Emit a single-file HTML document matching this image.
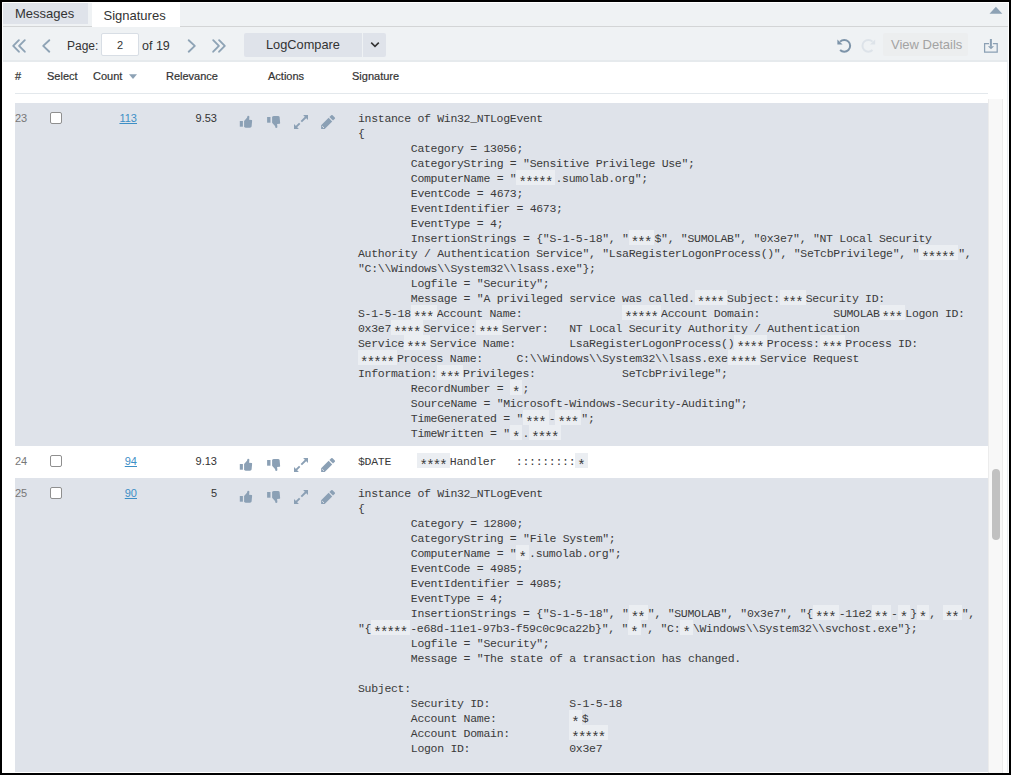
<!DOCTYPE html>
<html><head><meta charset="utf-8">
<style>
*{box-sizing:border-box;margin:0;padding:0}
html,body{width:1011px;height:775px;overflow:hidden;background:#000}
body{font-family:"Liberation Sans",sans-serif;color:#333;position:relative}
.abs{position:absolute}
#frame{left:2px;top:2px;width:1007px;height:771px;background:#fff}
#tabbar{left:3px;top:3px;width:1005px;height:24px;background:#eff2f4}
#tabline{left:3px;top:26px;width:1005px;height:1px;background:#d3d5d6}
#tab-msg{left:3px;top:3px;width:85px;height:21px;background:#dfe3ea;font-size:13px;line-height:15px}
#tab-sig{left:92px;top:2px;width:88px;height:25px;background:#fff;font-size:13px;line-height:15px}
#toolbar{left:3px;top:27px;width:1005px;height:35px;background:#eff2f4;border-bottom:2px solid #e6eaed}
.tt{position:absolute;font-size:12.5px;line-height:15px;color:#333}
#pinput{left:101px;top:33px;width:38px;height:23px;background:#fff;border:1px solid #d8dee5;border-radius:2px}
#lcbtn{left:244px;top:33px;width:118px;height:24px;background:#dfe3ea;border-radius:2px 0 0 2px}
#lcdd{left:363px;top:33px;width:23px;height:24px;background:#dfe3ea;border-radius:0 2px 2px 0}
#vdbtn{left:883px;top:33px;width:85px;height:23px;background:#eceeef;border-radius:2px}
.th{position:absolute;top:70px;font-size:11px;font-weight:normal;-webkit-text-stroke:0.2px #333;line-height:13px;color:#333}
#hline{left:15px;top:93px;width:973px;height:1px;background:#e3e8ec}
.row{position:absolute;left:15px;width:973px;overflow:hidden}
.gray{background:#dfe3ea}
.num{position:absolute;left:0;font-size:11px;color:#777;line-height:13px}
.cnt{position:absolute;font-size:11px;color:#3d8fc6;text-decoration:underline;line-height:13px}
.rel{position:absolute;font-size:11px;color:#333;line-height:13px;text-align:right;width:60px;left:142px}
.cb{position:absolute;left:35px;width:12px;height:12px;border:1px solid #8f8f8f;border-radius:2px;background:#fff}
.acts{position:absolute;left:221px;top:9px}
.sig{position:absolute;left:343px;font-family:"Liberation Mono",monospace;font-size:11.5px;letter-spacing:-0.3px;line-height:15px;white-space:pre;tab-size:8;color:#3a3a3a}
.m{display:inline-block;height:15px;vertical-align:top;position:relative;top:-1px;background:#ebeef2;padding:0 3px}
.m b{font-weight:normal;font-size:14px;line-height:15px;letter-spacing:-1.8px;position:relative;top:5.8px;left:-0.9px}
#scroll{left:988px;top:99px;width:15px;height:674px;background:#f8f8f8;border-left:1px solid #ececec;border-right:1px solid #ececec}
#thumb{left:992px;top:469px;width:8px;height:71px;background:#c1c1c1;border-radius:4px}
</style></head><body>
  <div id="frame" class="abs"></div>
  <div id="tabbar" class="abs"></div>
  <div id="tabline" class="abs"></div>
  <div id="tab-msg" class="abs"><span style="position:absolute;left:12px;top:3px">Messages</span></div>
  <div id="tab-sig" class="abs"><span style="position:absolute;top:6px;left:11.5px">Signatures</span></div>
  <svg class="abs" style="left:0;top:0" width="1011" height="62" viewBox="0 0 1011 62">
    <path d="M989.5 13.7 L995.9 6.8 L1002.3 13.7 Z" fill="#8da2b5"/>
  </svg>

  <div id="toolbar" class="abs"></div>
  <div class="tt" style="left:67px;top:39px;font-size:12px">Page:</div>
  <div id="pinput" class="abs"><span style="position:absolute;left:15px;top:5px;font-size:11px;line-height:13px">2</span></div>
  <div class="tt" style="left:142px;top:39px">of 19</div>
  <div id="lcbtn" class="abs"><span style="position:absolute;left:22px;top:4px;font-size:12.8px;line-height:15px">LogCompare</span></div>
  <div id="lcdd" class="abs"></div>
  <div id="vdbtn" class="abs"><span style="position:absolute;left:8px;top:4px;font-size:13px;line-height:15px;color:#a3a3a3">View Details</span></div>
  <svg class="abs" style="left:0;top:0" width="1011" height="62" viewBox="0 0 1011 62">
    <g fill="none" stroke="#8ea3b5" stroke-width="1.9" stroke-linecap="round" stroke-linejoin="round">
      <polyline points="18.9,40.2 13.2,45.9 18.9,51.7"/>
      <polyline points="24.8,40.2 19.1,45.9 24.8,51.7"/>
      <polyline points="49.3,40.2 43.2,45.9 49.3,51.7"/>
      <polyline points="188.7,40.2 194.8,45.9 188.7,51.7"/>
      <polyline points="213.2,40.2 218.9,45.9 213.2,51.7"/>
      <polyline points="219.1,40.2 224.8,45.9 219.1,51.7"/>
    </g>
    <polyline points="371.2,42.6 375,46.3 378.8,42.6" fill="none" stroke="#333" stroke-width="1.6"/>
    <path d="M840.1 41.6 A5.9 5.9 0 1 1 840.1 50.0" fill="none" stroke="#7d94a9" stroke-width="2"/>
    <path d="M837.4 39.4 L837.4 44.6 L842.6 44.6 Z" fill="#7d94a9"/>
    <path d="M872.5 41.6 A5.9 5.9 0 1 0 872.5 50.0" fill="none" stroke="#dde3e9" stroke-width="2"/>
    <path d="M875.2 39.4 L875.2 44.6 L870.0 44.6 Z" fill="#dde3e9"/>
    <path d="M989.0 43.6 H984.6 V52.1 H997.2 V43.6 H992.9" fill="none" stroke="#8ba0b4" stroke-width="1.25"/>
    <rect x="989.9" y="39" width="2" height="7.5" fill="#8ba0b4"/>
    <path d="M987.9 46.2 H994.1 L991 49.3 Z" fill="#8ba0b4"/>
  </svg>

  <div class="th" style="left:15px">#</div>
  <div class="th" style="left:47px">Select</div>
  <div class="th" style="left:93px">Count</div>
  <svg class="abs" style="left:128px;top:74px" width="10" height="6" viewBox="0 0 10 6"><path d="M1 0.3 H9 L5 5 Z" fill="#8da2b5"/></svg>
  <div class="th" style="left:166px">Relevance</div>
  <div class="th" style="left:268px">Actions</div>
  <div class="th" style="left:352px">Signature</div>
  <div id="hline" class="abs"></div>

<svg width="0" height="0" style="position:absolute"><defs><g id="acts" fill="#8ba0b5">
<g transform="translate(239,115)">
 <rect x="0.8" y="6" width="3.1" height="5.7"/>
 <path d="M5.1 5.9 L8.0 2.8 L8.5 1.0 Q9.6 0.4 10.4 1.4 L10.1 4.7 L12.8 4.9 Q13.3 5.3 13.1 6.1 L12.6 11.6 Q12.4 12.7 11.0 12.7 L6.6 12.7 L5.1 12.0 Z"/>
</g>
<g transform="translate(267,128.7) scale(1,-1)">
 <rect x="0.1" y="6" width="3.4" height="5.7"/>
 <path d="M5.1 5.9 L8.0 2.8 L8.5 1.0 Q9.6 0.4 10.4 1.4 L10.1 4.7 L12.8 4.9 Q13.3 5.3 13.1 6.1 L12.6 11.6 Q12.4 12.7 11.0 12.7 L6.6 12.7 L5.1 12.0 Z"/>
</g>
<g transform="translate(290,112)">
 <path d="M13.1 3.1 L18.0 3.1 L18.0 8.0 Z"/>
 <path d="M4.0 16.9 L4.0 12.0 L8.9 16.9 Z"/>
 <path d="M11.3 9.7 L16.0 5.0 M9.7 11.3 L5.4 15.6" stroke="#8ba0b5" stroke-width="1.9" fill="none"/>
 <path d="M31.1 16.9 L31.1 13.3 L38.6 5.8 L42.2 9.4 L34.7 16.9 Z"/>
 <path d="M39.4 5.0 L41.2 3.2 Q41.9 2.6 42.6 3.2 L44.8 5.4 Q45.4 6.1 44.8 6.8 L43.0 8.6 Z"/>
 <path d="M32.2 14.1 L34.0 15.9" stroke="#dfe3ea" stroke-width="1" fill="none"/>
</g>
</g></defs></svg>

  <div class="row gray" style="top:103px;height:343px">
    <div class="num" style="top:9px">23</div>
    <div class="cb" style="top:9px"></div>
    <div class="cnt" style="top:9px;right:851px">113</div>
    <div class="rel" style="top:9px">9.53</div>
    <svg class="acts" width="104" height="20" viewBox="236 112 104 20"><use href="#acts"/></svg>
    <div class="sig" style="top:8px">instance of Win32_NTLogEvent
{
	Category = 13056;
	CategoryString = "Sensitive Privilege Use";
	ComputerName = "<span class="m"><b>*****</b></span>.sumolab.org";
	EventCode = 4673;
	EventIdentifier = 4673;
	EventType = 4;
	InsertionStrings = {"S-1-5-18", "<span class="m"><b>***</b></span>$", "SUMOLAB", "0x3e7", "NT Local Security
Authority / Authentication Service", "LsaRegisterLogonProcess()", "SeTcbPrivilege", "<span class="m"><b>*****</b></span>",
"C:\\Windows\\System32\\lsass.exe"};
	Logfile = "Security";
	Message = "A privileged service was called.<span class="m"><b>****</b></span>Subject:<span class="m"><b>***</b></span>Security ID:
S-1-5-18<span class="m"><b>***</b></span>Account Name:		<span class="m"><b>*****</b></span>Account Domain:		SUMOLAB<span class="m"><b>***</b></span>Logon ID:
0x3e7<span class="m"><b>****</b></span>Service:<span class="m"><b>***</b></span>Server:	NT Local Security Authority / Authentication
Service<span class="m"><b>***</b></span>Service Name:	LsaRegisterLogonProcess()<span class="m"><b>****</b></span>Process:<span class="m"><b>***</b></span>Process ID:
<span class="m"><b>*****</b></span>Process Name:	C:\\Windows\\System32\\lsass.exe<span class="m"><b>****</b></span>Service Request
Information:<span class="m"><b>***</b></span>Privileges:		SeTcbPrivilege";
	RecordNumber = <span class="m"><b>*</b></span>;
	SourceName = "Microsoft-Windows-Security-Auditing";
	TimeGenerated = "<span class="m"><b>***</b></span>-<span class="m"><b>***</b></span>";
	TimeWritten = "<span class="m"><b>*</b></span>.<span class="m"><b>****</b></span></div>
  </div>
  <div class="row" style="top:446px;height:32px;background:#fff">
    <div class="num" style="top:9px">24</div>
    <div class="cb" style="top:9px"></div>
    <div class="cnt" style="top:9px;right:851px">94</div>
    <div class="rel" style="top:9px">9.13</div>
    <svg class="acts" width="104" height="20" viewBox="236 112 104 20"><use href="#acts"/></svg>
    <div class="sig" style="top:8px">$DATE    <span class="m"><b>****</b></span>Handler   :::::::::<span class="m"><b>*</b></span></div>
  </div>
  <div class="row gray" style="top:478px;height:294px">
    <div class="num" style="top:9px">25</div>
    <div class="cb" style="top:9px"></div>
    <div class="cnt" style="top:9px;right:851px">90</div>
    <div class="rel" style="top:9px">5</div>
    <svg class="acts" width="104" height="20" viewBox="236 112 104 20"><use href="#acts"/></svg>
    <div class="sig" style="top:8px">instance of Win32_NTLogEvent
{
	Category = 12800;
	CategoryString = "File System";
	ComputerName = "<span class="m"><b>*</b></span>.sumolab.org";
	EventCode = 4985;
	EventIdentifier = 4985;
	EventType = 4;
	InsertionStrings = {"S-1-5-18", "<span class="m"><b>**</b></span>", "SUMOLAB", "0x3e7", "{<span class="m"><b>***</b></span>-11e2<span class="m"><b>**</b></span>-<span class="m"><b>*</b></span>}<span class="m"><b>*</b></span>, <span class="m"><b>**</b></span>",
"{<span class="m"><b>*****</b></span>-e68d-11e1-97b3-f59c0c9ca22b}", "<span class="m"><b>*</b></span>", "C:<span class="m"><b>*</b></span>\Windows\\System32\\svchost.exe"};
	Logfile = "Security";
	Message = "The state of a transaction has changed.

Subject:
	Security ID:		S-1-5-18
	Account Name:		<span class="m"><b>*</b></span>$
	Account Domain:		<span class="m"><b>*****</b></span>
	Logon ID:		0x3e7
</div>
  </div>

  <div id="scroll" class="abs"></div>
  <div id="thumb" class="abs"></div>
  <div class="abs" style="left:1007px;top:62px;width:1px;height:710px;background:#e9edf1"></div>
</body></html>
